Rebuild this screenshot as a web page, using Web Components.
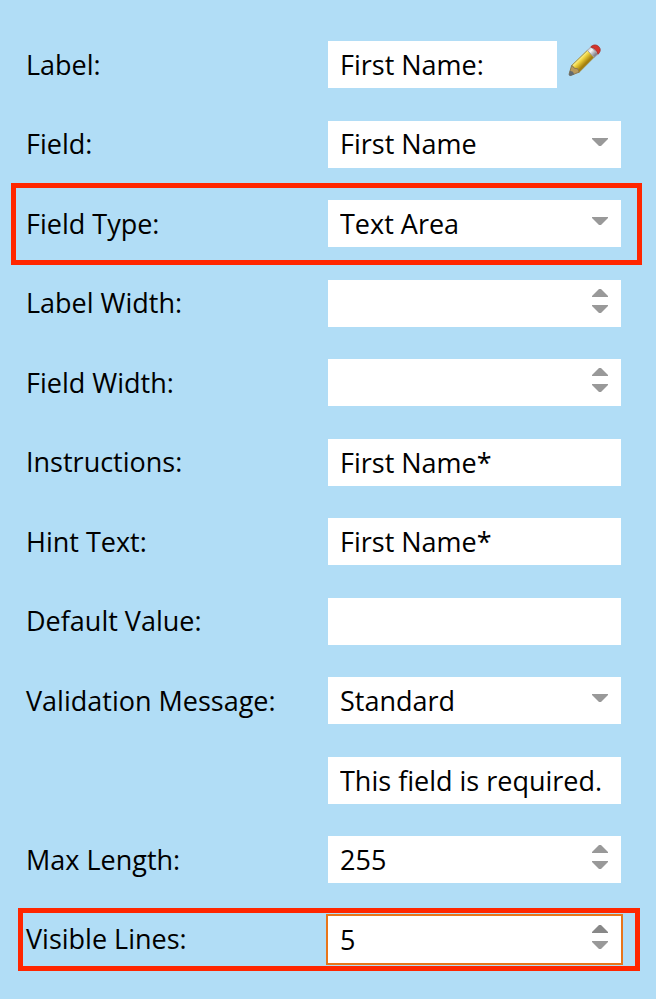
<!DOCTYPE html>
<html lang="en">
<head>
<meta charset="utf-8">
<meta name="viewport" content="width=device-width, initial-scale=1">
<title>Field properties</title>
<style>
  body {
    margin: 0;
    background-color: #b1ddf6;
    color: #000;
    font-family: "Open Sans", "Noto Sans", sans-serif;
    font-size: 27px;
    line-height: 36px;
  }
</style>
</head>
<body>
<field-panel>
  <text-field value="First Name:" editable>Label:</text-field>
  <select-field options="First Name,Last Name,Email Address">Field:</select-field>
  <select-field options="Text Area,Text,Select" highlight="wide">Field Type:</select-field>
  <number-field>Label Width:</number-field>
  <number-field>Field Width:</number-field>
  <text-field value="First Name*">Instructions:</text-field>
  <text-field value="First Name*">Hint Text:</text-field>
  <text-field>Default Value:</text-field>
  <select-field options="Standard,Custom">Validation Message:</select-field>
  <text-field value="This field is required." name="Validation message text"></text-field>
  <number-field value="255">Max Length:</number-field>
  <number-field value="5" highlight="tight" active>Visible Lines:</number-field>
</field-panel>

<script>
/**
 * Styles shared by every field row
 */
const fieldStyles = `
  * {
    box-sizing: border-box;
    margin: 0;
    padding: 0;
  }

  :host {
    display: grid;
    grid-template-columns: 302px 1fr;
    align-items: center;
    position: relative;
  }
  :host([highlight])::after {
    content: "";
    position: absolute;
    border: 5px solid #ff2600;
    pointer-events: none;
  }
  :host([highlight="wide"])::after {
    inset: -17px -21px -18px -15px;
  }
  :host([highlight="tight"])::after {
    inset: -8px -19px -8px -8px;
  }
  :host([active]) .control {
    outline: 2px solid #e8751a;
  }

  .control {
    display: grid;
    height: 47px;
    min-width: 0;
    background-color: #fff;
  }
  .control > * {
    grid-area: 1 / 1;
  }
  input, select {
    width: 100%;
    min-width: 0;
    height: 100%;
    border: none;
    border-radius: 0;
    outline: none;
    padding: 0 12px;
    background-color: transparent;
    color: inherit;
    font: inherit;
    appearance: none;
  }
  button {
    border: none;
    background-color: transparent;
    cursor: pointer;
  }
  svg {
    display: block;
  }
`;

/**
 * Column of field rows, spread over the height of the window
 */
class FieldPanel extends HTMLElement {
  constructor() {
    super();
    this.attachShadow({ mode: "open" }).innerHTML = `
      <style>
        :host { display: block; }
        form {
          box-sizing: border-box;
          min-height: 100vh;
          padding: 41px 35px 36px 26px;
          display: flex;
          flex-direction: column;
          justify-content: space-between;
          gap: 16px;
        }
      </style>
      <form><slot></slot></form>
    `;
  }
}

/**
 * Base row: the label is slotted, the control comes from the subclass
 */
class BaseField extends HTMLElement {
  constructor() {
    super();
    this.attachShadow({ mode: "open" });
  }

  connectedCallback() {
    this.shadowRoot.innerHTML = `
      <style>${fieldStyles}</style>
      <label for="control"><slot></slot></label>
      ${this.renderControl()}
    `;
    if (this.hasAttribute("name")) {
      this.shadowRoot.getElementById("control").setAttribute("aria-label", this.getAttribute("name"));
    }
  }
}

class TextField extends BaseField {
  renderControl() {
    const box = `
      <div class="control">
        <input id="control" type="text" value="${this.getAttribute("value") || ""}">
      </div>
    `;
    if (!this.hasAttribute("editable")) return box;

    return `
      <style>
        .editable {
          display: grid;
          grid-template-columns: 1fr 53px;
          gap: 11px;
        }
        .edit {
          padding-top: 3px;
          justify-self: start;
          align-self: start;
        }
      </style>
      <div class="editable">
        ${box}
        <button class="edit" type="button" aria-label="Edit label">
          <svg width="33" height="33" viewBox="0 0 34 34">
            <defs>
              <linearGradient id="wood" x1="10" y1="12" x2="18" y2="20" gradientUnits="userSpaceOnUse">
                <stop offset="0" stop-color="#c7a51f"/>
                <stop offset=".3" stop-color="#fbf08a"/>
                <stop offset=".55" stop-color="#ecd03c"/>
                <stop offset="1" stop-color="#a5800f"/>
              </linearGradient>
              <linearGradient id="metal" x1="21" y1="4" x2="28" y2="11" gradientUnits="userSpaceOnUse">
                <stop offset="0" stop-color="#b9b9bd"/>
                <stop offset=".4" stop-color="#fafafa"/>
                <stop offset="1" stop-color="#85858d"/>
              </linearGradient>
            </defs>
            <path d="M4 22 20 6.5 27 13.5 11 29.5z" fill="url(#wood)" stroke="#9a8435"/>
            <path d="M3.8 22 1 31.5 2.5 32.5 11.5 29 10 25.5 6.5 25z" fill="#b99a5c" stroke="#8b7950"/>
            <path d="M2 27.5 1 32 2 33 6.5 31.5 5 28.5z" fill="#626a70"/>
            <path d="M20 6.5 23.5 3 31 10.5 27 14z" fill="url(#metal)" stroke="#a8a8b0"/>
            <path d="M23.5 3C26 .5 29 .5 31.5 2.5 34 5 33.5 8 31 10.5 30 7 27 4 23.5 3z" fill="#d5342b" stroke="#a92d27"/>
          </svg>
        </button>
      </div>
    `;
  }
}

class SelectField extends BaseField {
  renderControl() {
    const options = this.getAttribute("options").split(",");
    return `
      <style>
        .arrow {
          justify-self: end;
          margin: 17px 13px 0 0;
          pointer-events: none;
        }
      </style>
      <div class="control">
        <select id="control">
          ${options.map((option) => `<option>${option}</option>`).join("")}
        </select>
        <svg class="arrow" width="16" height="9" viewBox="0 0 16 9">
          <path d="M0 0H16V1L9 8H7L0 1z" fill="#999"/>
        </svg>
      </div>
    `;
  }
}

class NumberField extends BaseField {
  renderControl() {
    return `
      <style>
        input {
          appearance: textfield;
        }
        input::-webkit-inner-spin-button {
          appearance: none;
          margin: 0;
        }
        .spinner {
          justify-self: end;
          margin: 9px 13px 0 0;
          display: flex;
          flex-direction: column;
          align-self: start;
          gap: 8px;
        }
        :host([active]) .up path {
          fill: #888;
        }
      </style>
      <div class="control">
        <input id="control" type="number" value="${this.getAttribute("value") || ""}">
        <div class="spinner">
          <button class="up" type="button" tabindex="-1" aria-label="Increase">
            <svg width="16" height="8" viewBox="0 0 16 8"><path d="M0 8V7L7 0H9L16 7V8z" fill="#999"/></svg>
          </button>
          <button class="down" type="button" tabindex="-1" aria-label="Decrease">
            <svg width="16" height="8" viewBox="0 0 16 8"><path d="M0 0H16V1L9 8H7L0 1z" fill="#999"/></svg>
          </button>
        </div>
      </div>
    `;
  }

  connectedCallback() {
    super.connectedCallback();
    const input = this.shadowRoot.getElementById("control");
    this.shadowRoot.querySelector(".up").addEventListener("click", () => input.stepUp());
    this.shadowRoot.querySelector(".down").addEventListener("click", () => input.stepDown());
  }
}

customElements.define("field-panel", FieldPanel);
customElements.define("text-field", TextField);
customElements.define("select-field", SelectField);
customElements.define("number-field", NumberField);
</script>
</body>
</html>
